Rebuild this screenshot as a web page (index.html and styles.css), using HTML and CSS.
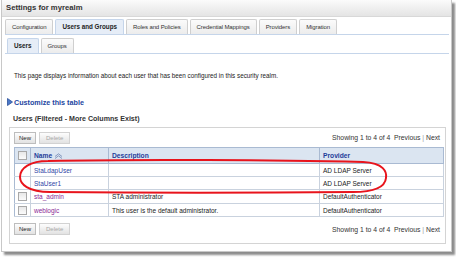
FILE: index.html
```html
<!DOCTYPE html>
<html>
<head>
<meta charset="utf-8">
<link rel="stylesheet" href="styles.css">
</head>
<body>
<div class="frame">
  <div class="titlebar">Settings for myrealm</div>
  <div class="tabs">
    <div class="tab">Configuration</div>
    <div class="tab active">Users and Groups</div>
    <div class="tab">Roles and Policies</div>
    <div class="tab">Credential Mappings</div>
    <div class="tab">Providers</div>
    <div class="tab">Migration</div>
  </div>
  <div class="tabs sub">
    <div class="tab active">Users</div>
    <div class="tab">Groups</div>
  </div>
  <p class="intro">This page displays information about each user that has been configured in this security realm.</p>
  <div class="customize">
    <svg class="disc" width="6" height="8" viewBox="0 0 6 8"><path d="M0.5 0.5 L5.5 4 L0.5 7.5 Z" fill="#4a78c8" stroke="#2a4f9a" stroke-width="0.8"/></svg>
    <span>Customize this table</span>
  </div>
  <div class="caption">Users (Filtered - More Columns Exist)</div>
  <div class="panel">
    <div class="toolbar">
      <div class="btns"><span class="btn">New</span><span class="btn disabled">Delete</span></div>
      <div class="pager">Showing 1 to 4 of 4&nbsp;&nbsp;Previous <span class="sep">|</span> Next</div>
    </div>
    <table class="grid">
      <colgroup><col class="c-chk"><col class="c-name"><col class="c-desc"><col class="c-prov"></colgroup>
      <thead>
        <tr>
          <th><span class="cb"></span></th>
          <th>Name <svg class="sort" width="9" height="6" viewBox="0 0 9 6"><path d="M1 3.5 L4.5 0.8 L8 3.5 M1 5.5 L4.5 2.8 L8 5.5" fill="none" stroke="#7a8fb8" stroke-width="0.9"/></svg></th>
          <th>Description</th>
          <th>Provider</th>
        </tr>
      </thead>
      <tbody>
        <tr><td></td><td><a class="lnk">StaLdapUser</a></td><td></td><td>AD LDAP Server</td></tr>
        <tr><td></td><td><a class="lnk">StaUser1</a></td><td></td><td>AD LDAP Server</td></tr>
        <tr><td><span class="cb"></span></td><td><a class="lnk visited">sta_admin</a></td><td>STA administrator</td><td>DefaultAuthenticator</td></tr>
        <tr><td><span class="cb"></span></td><td><a class="lnk visited">weblogic</a></td><td>This user is the default administrator.</td><td>DefaultAuthenticator</td></tr>
      </tbody>
    </table>
    <div class="toolbar bottom">
      <div class="btns"><span class="btn">New</span><span class="btn disabled">Delete</span></div>
      <div class="pager">Showing 1 to 4 of 4&nbsp;&nbsp;Previous <span class="sep">|</span> Next</div>
    </div>
  </div>
  <svg class="mark" width="372" height="38" viewBox="0 0 372 38"><path d="M30 3 C120 1 260 2 345 4 C366 5 369 14 368 20 C367 30 355 34 335 34 C240 35 120 35 32 34 C10 34 2 26 2 19 C2 10 12 3 30 3 Z" fill="none" stroke="#e8141c" stroke-width="2"/></svg>
</div>
</body>
</html>
```

FILE: styles.css
```css
html, body {
  margin: 0;
  padding: 0;
  background: #ffffff;
}
body {
  font-family: "Liberation Sans", Arial, sans-serif;
  font-size: 6.5px;
  color: #222;
  width: 456px;
  height: 260px;
  overflow: hidden;
}
.frame {
  position: relative;
  margin: 0 0 0 1px;
  width: 449px;
  height: 251px;
  border: 1px solid #c8c8c8;
  border-top: 0;
  box-shadow: 3px 3px 2px #8c8c8c;
  background: #fff;
}
.titlebar {
  height: 16px;
  line-height: 16px;
  padding-left: 4px;
  font-weight: bold;
  font-size: 7.7px;
  color: #333;
  background: linear-gradient(#fbfbfb, #e4e4e4);
  border-bottom: 1px solid #d8d8d8;
}
.tabs {
  display: flex;
  gap: 2px;
  margin: 1px 2px 0 3px;
  border-bottom: 1px solid #c5d5ea;
  height: 16px;
  align-items: flex-end;
}
.tab {
  height: 14px;
  line-height: 14px;
  padding: 0 6px;
  border: 1px solid #cfcfcf;
  border-bottom: 0;
  border-radius: 2px 2px 0 0;
  background: linear-gradient(#fbfbfb, #ececec);
  color: #333;
  white-space: nowrap;
  font-size: 6px;
  letter-spacing: -0.1px;
}
.tab.active {
  background: #e6edf7;
  border-color: #c5d5ea;
  font-weight: bold;
  font-size: 6.3px;
  color: #222;
  letter-spacing: 0;
}
.tabs.sub {
  margin-top: 2px;
  padding-left: 2px;
}
.intro {
  margin: 17px 0 0 12px;
  line-height: 10px;
  font-size: 6.3px;
}
.customize {
  display: flex;
  align-items: center;
  gap: 1px;
  margin: 16px 0 0 5px;
  height: 10px;
  font-weight: bold;
  font-size: 7.2px;
  color: #1c45a0;
}
.caption {
  margin: 7px 0 0 11px;
  height: 10px;
  line-height: 10px;
  font-weight: bold;
  font-size: 7.1px;
  color: #333;
}
.panel {
  margin: 3px 0 0 7px;
  width: 437px;
  height: 117px;
  border: 1px solid #d4d4d4;
  box-sizing: border-box;
  padding: 0 4px;
}
.toolbar {
  display: flex;
  justify-content: space-between;
  align-items: center;
  height: 19px;
}
.toolbar.bottom {
  height: 18px;
  margin-top: 3px;
}
.btns {
  display: flex;
  gap: 3px;
}
.btn {
  height: 10px;
  line-height: 10px;
  padding: 0 4px;
  border: 1px solid #bdbdbd;
  background: linear-gradient(#fdfdfd, #e2e2e2);
  color: #222;
  font-size: 6px;
}
.btn.disabled {
  color: #a8a8a8;
  border-color: #d2d2d2;
  padding: 0 6px;
}
.pager {
  color: #333;
  font-size: 6.8px;
  padding-right: 1px;
}
.sep {
  color: #999;
}
.grid {
  border-collapse: collapse;
  width: 429px;
  table-layout: fixed;
  border: 1px solid #8da3c3;
}
.c-chk { width: 16px; }
.c-name { width: 78px; }
.c-desc { width: 211px; }
.c-prov { width: 124px; }
.grid th {
  height: 15px;
  background: #dbe5f1;
  color: #1f3d9a;
  text-align: left;
  padding: 0 3px;
  border: 1px solid #a9bad2;
  font-weight: bold;
  font-size: 6.7px;
}
.grid td {
  height: 12px;
  padding: 0 3px;
  border: 1px solid #c9d2de;
  border-left-color: #a9bad2;
  white-space: nowrap;
}
.grid tbody tr:nth-child(3) td { height: 13px; }
.cb {
  display: block;
  width: 7px;
  height: 7px;
  border: 1px solid #a8a8a8;
  background: linear-gradient(#e8e8e8, #fbfbfb);
  margin: 0 auto;
}
.sort {
  vertical-align: middle;
  margin-left: 0;
}
.lnk {
  color: #2f46a6;
}
.lnk.visited {
  color: #8a2896;
}
.mark {
  position: absolute;
  left: 16px;
  top: 158px;
}
```
